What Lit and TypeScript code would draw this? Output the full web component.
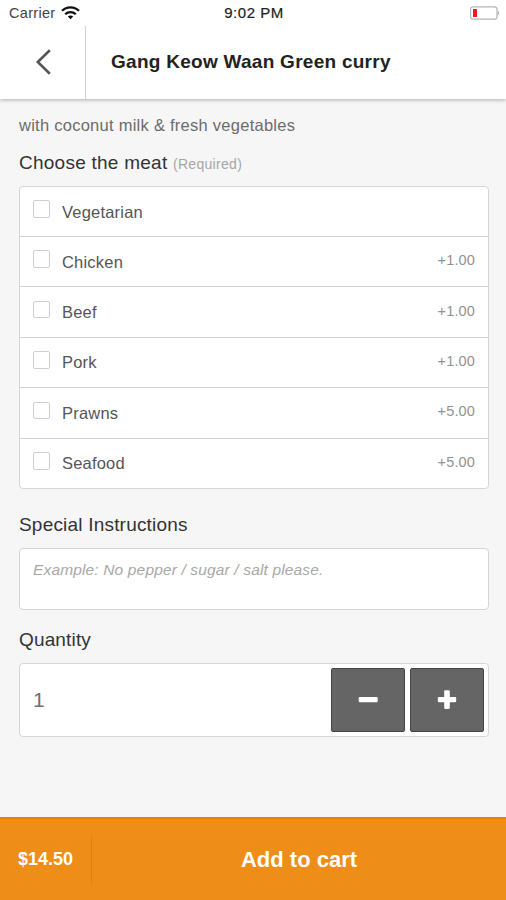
import { LitElement, html, css } from "lit";
import { customElement, property, state } from "lit/decorators.js";

interface Option {
  name: string;
  price?: string;
}

const OPTIONS: Option[] = [
  { name: "Vegetarian" },
  { name: "Chicken", price: "+1.00" },
  { name: "Beef", price: "+1.00" },
  { name: "Pork", price: "+1.00" },
  { name: "Prawns", price: "+5.00" },
  { name: "Seafood", price: "+5.00" },
];

@customElement("status-bar")
class StatusBar extends LitElement {
  static styles = css`
    :host {
      display: grid;
      grid-template-columns: 1fr auto 1fr;
      align-items: center;
      height: 26px;
      box-sizing: border-box;
      padding: 0 7px 0 9px;
      background: #fff;
    }
    .carrier {
      display: flex;
      align-items: center;
      gap: 6px;
      font-size: 14.5px;
      letter-spacing: 0.3px;
      color: #444;
    }
    .time {
      font-size: 15px;
      letter-spacing: 0.55px;
      color: #222;
      padding-bottom: 1px;
      -webkit-text-stroke: 0.2px #222;
    }
    .battery {
      justify-self: end;
    }
    svg {
      display: block;
    }
  `;
  render() {
    return html`
      <div class="carrier">
        <span>Carrier</span>
        <svg width="19" height="14" viewBox="0 0 19 14" fill="none" stroke="#111">
          <path d="M1 4.8C5.7 .1 13.3 .1 18 4.8" stroke-width="2.3" />
          <path d="M4.2 8.3C7.2 5.4 11.8 5.4 14.8 8.3" stroke-width="2.2" />
          <path d="M9.5 13.3L6.8 10.6C8.3 9.2 10.7 9.2 12.2 10.6Z" fill="#111" stroke="none" />
        </svg>
      </div>
      <div class="time">9:02 PM</div>
      <svg class="battery" width="30" height="14" viewBox="0 0 30 14">
        <rect x="1.6" y="0.8" width="26.4" height="12.4" rx="2.5" fill="#fff" stroke="#b5b5b5" stroke-width="1.2" />
        <path d="M28.6 4.8C30.4 5.4 30.4 8.6 28.6 9.2Z" fill="#aaa" />
        <rect x="4" y="3" width="4" height="8" rx=".6" fill="#f9161a" />
      </svg>
    `;
  }
}

@customElement("option-row")
class OptionRow extends LitElement {
  @property() name = "";
  @property() price = "";
  static styles = css`
    :host {
      display: flex;
      align-items: center;
      padding: 0 13px 0 12px;
    }
    .box {
      width: 15.5px;
      height: 15.5px;
      border: 1px solid #cfcfcf;
      border-radius: 2px;
      background: #fff;
      margin: 0 12px 5px 0.5px;
    }
    .name {
      flex: 1;
      font-size: 16.5px;
      letter-spacing: 0.2px;
      color: #555;
      padding-top: 1px;
    }
    .price {
      font-size: 14.5px;
      letter-spacing: 0.15px;
      color: #929292;
      padding-bottom: 3px;
    }
  `;
  render() {
    return html`
      <span class="box"></span>
      <span class="name">${this.name}</span>
      <span class="price">${this.price}</span>
    `;
  }
}

@customElement("app-root")
class AppRoot extends LitElement {
  @state() quantity = 1;
  static styles = css`
    :host {
      display: flex;
      flex-direction: column;
      height: 900px;
      background: #f6f6f6;
      font-family: "Liberation Sans", Arial, sans-serif;
      overflow: hidden;
    }
    header {
      display: flex;
      height: 73px;
      background: #fff;
      box-shadow: 0 1px 4px rgba(0, 0, 0, 0.3);
      clip-path: inset(0 0 -8px 0);
    }
    .back {
      width: 85px;
      border-right: 1px solid #d2d2d2;
      display: flex;
      align-items: center;
      justify-content: center;
      padding-bottom: 2px;
      box-sizing: border-box;
      width: 86px;
    }
    h1 {
      margin: 0;
      padding: 0 0 2px 25px;
      align-self: center;
      font-size: 19px;
      letter-spacing: 0.27px;
      color: #222;
    }
    main {
      flex: 1;
      padding: 0 17px 0 19px;
      display: flex;
      flex-direction: column;
    }
    .description {
      margin: 16px 0 0;
      font-size: 16.5px;
      line-height: 20px;
      letter-spacing: 0.26px;
      color: #6c6c6c;
    }
    h2 {
      margin: 0;
      font-weight: 400;
      font-size: 19px;
      line-height: 24px;
      letter-spacing: 0.25px;
      color: #333;
    }
    .choose {
      margin-top: 16px;
    }
    .required {
      font-size: 14px;
      letter-spacing: 0.3px;
      color: #a6a6a6;
    }
    .card {
      box-sizing: border-box;
      background: #fff;
      border: 1px solid #d5d5d5;
      border-radius: 4px;
    }
    .options {
      margin-top: 10px;
      height: 303px;
      display: grid;
      grid-template-rows: 49px repeat(5, 1fr);
    }
    option-row + option-row {
      border-top: 1px solid #d2d2d2;
    }
    .special {
      margin-top: 24px;
      letter-spacing: 0.2px;
    }
    .note {
      margin-top: 11px;
      height: 62px;
      padding: 12px 13px;
      font-size: 15.5px;
      line-height: 18px;
      font-style: italic;
      letter-spacing: 0.15px;
      color: #a8a8a8;
    }
    .quantity {
      margin-top: 18px;
      letter-spacing: 0.15px;
    }
    .stepper {
      margin-top: 11px;
      height: 74px;
      display: flex;
      gap: 5px;
      padding: 4px 4px 4px 13px;
    }
    .count {
      flex: 1;
      align-self: center;
      font-size: 21px;
      color: #707070;
      padding-bottom: 1px;
    }
    button {
      width: 74px;
      padding: 0;
      border: 1px solid #454545;
      border-radius: 2px;
      background: #656565;
      display: flex;
      align-items: center;
      justify-content: center;
    }
    footer {
      height: 83px;
      box-sizing: border-box;
      border-top: 2px solid #ec800e;
      background: #ef8d19;
      color: #fff;
      font-weight: 700;
      display: flex;
      align-items: center;
    }
    .total {
      width: 92px;
      height: 49px;
      box-sizing: border-box;
      padding: 0 0 0 18px;
      border-right: 1px solid #e3800f;
      font-size: 18px;
      line-height: 49px;
    }
    .add {
      flex: 1;
      text-align: center;
      font-size: 22px;
    }
    svg {
      display: block;
    }
  `;
  render() {
    return html`
      <status-bar></status-bar>
      <header>
        <div class="back">
          <svg width="16" height="26" viewBox="0 0 16 26" fill="none" stroke="#555" stroke-width="2.6">
            <path d="M14.8 1.2L2.8 13L14.8 24.8" />
          </svg>
        </div>
        <h1>Gang Keow Waan Green curry</h1>
      </header>
      <main>
        <p class="description">with coconut milk &amp; fresh vegetables</p>
        <h2 class="choose">Choose the meat <span class="required">(Required)</span></h2>
        <div class="card options">
          ${OPTIONS.map((o) => html`<option-row .name=${o.name} .price=${o.price ?? ""}></option-row>`)}
        </div>
        <h2 class="special">Special Instructions</h2>
        <div class="card note">Example: No pepper / sugar / salt please.</div>
        <h2 class="quantity">Quantity</h2>
        <div class="card stepper">
          <span class="count">${this.quantity}</span>
          <button aria-label="Decrease" @click=${() => (this.quantity = Math.max(1, this.quantity - 1))}>
            <svg width="20" height="20" viewBox="0 0 20 20" fill="#fff">
              <rect x="0.7" y="7" width="19" height="5.2" rx="1.2" />
            </svg>
          </button>
          <button aria-label="Increase" @click=${() => (this.quantity += 1)}>
            <svg width="20" height="20" viewBox="0 0 20 20" fill="#fff">
              <rect x="0.8" y="6.9" width="18.4" height="5.4" rx="1.2" />
              <rect x="7.2" y="0.3" width="5.6" height="18.6" rx="1.2" />
            </svg>
          </button>
        </div>
      </main>
      <footer>
        <div class="total">$14.50</div>
        <div class="add">Add to cart</div>
      </footer>
    `;
  }
}
